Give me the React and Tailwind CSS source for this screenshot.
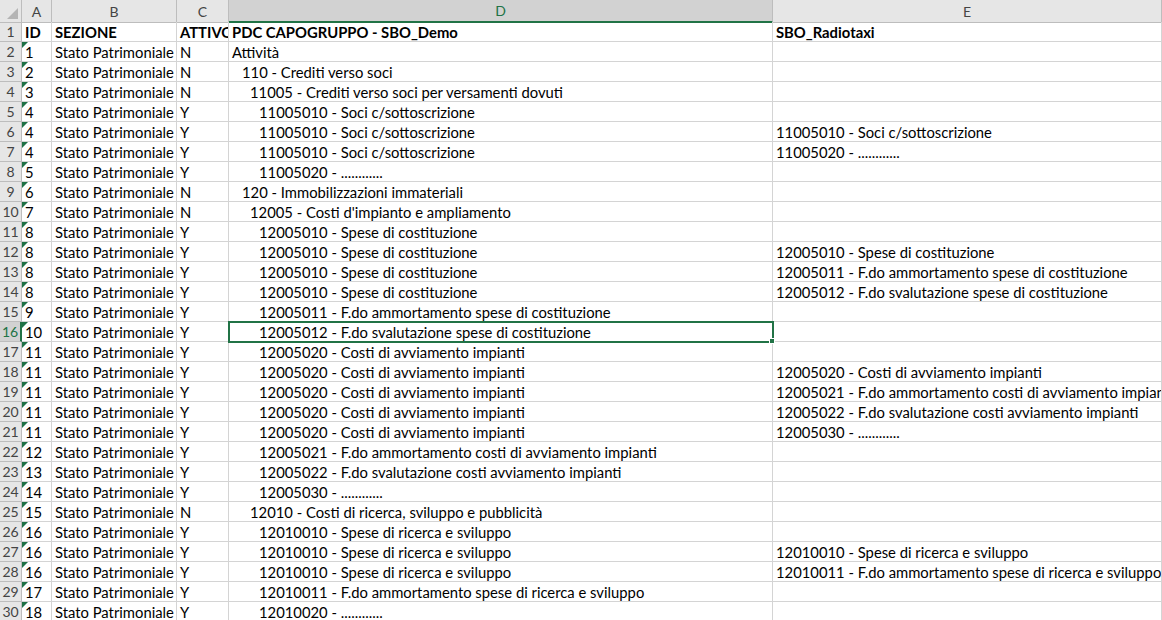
const rows = [
  ["ID", "SEZIONE", "ATTIVO", 0, "PDC CAPOGRUPPO - SBO_Demo", "SBO_Radiotaxi", true],
  ["1", "Stato Patrimoniale", "N", 0, "Attività", ""],
  ["2", "Stato Patrimoniale", "N", 1, "110 - Crediti verso soci", ""],
  ["3", "Stato Patrimoniale", "N", 2, "11005 - Crediti verso soci per versamenti dovuti", ""],
  ["4", "Stato Patrimoniale", "Y", 3, "11005010 - Soci c/sottoscrizione", ""],
  ["4", "Stato Patrimoniale", "Y", 3, "11005010 - Soci c/sottoscrizione", "11005010 - Soci c/sottoscrizione"],
  ["4", "Stato Patrimoniale", "Y", 3, "11005010 - Soci c/sottoscrizione", "11005020 - ............"],
  ["5", "Stato Patrimoniale", "Y", 3, "11005020 - ............", ""],
  ["6", "Stato Patrimoniale", "N", 1, "120 - Immobilizzazioni immateriali", ""],
  ["7", "Stato Patrimoniale", "N", 2, "12005 - Costi d'impianto e ampliamento", ""],
  ["8", "Stato Patrimoniale", "Y", 3, "12005010 - Spese di costituzione", ""],
  ["8", "Stato Patrimoniale", "Y", 3, "12005010 - Spese di costituzione", "12005010 - Spese di costituzione"],
  ["8", "Stato Patrimoniale", "Y", 3, "12005010 - Spese di costituzione", "12005011 - F.do ammortamento spese di costituzione"],
  ["8", "Stato Patrimoniale", "Y", 3, "12005010 - Spese di costituzione", "12005012 - F.do svalutazione spese di costituzione"],
  ["9", "Stato Patrimoniale", "Y", 3, "12005011 - F.do ammortamento spese di costituzione", ""],
  ["10", "Stato Patrimoniale", "Y", 3, "12005012 - F.do svalutazione spese di costituzione", ""],
  ["11", "Stato Patrimoniale", "Y", 3, "12005020 - Costi di avviamento impianti", ""],
  ["11", "Stato Patrimoniale", "Y", 3, "12005020 - Costi di avviamento impianti", "12005020 - Costi di avviamento impianti"],
  ["11", "Stato Patrimoniale", "Y", 3, "12005020 - Costi di avviamento impianti", "12005021 - F.do ammortamento costi di avviamento impianti"],
  ["11", "Stato Patrimoniale", "Y", 3, "12005020 - Costi di avviamento impianti", "12005022 - F.do svalutazione costi avviamento impianti"],
  ["11", "Stato Patrimoniale", "Y", 3, "12005020 - Costi di avviamento impianti", "12005030 - ............"],
  ["12", "Stato Patrimoniale", "Y", 3, "12005021 - F.do ammortamento costi di avviamento impianti", ""],
  ["13", "Stato Patrimoniale", "Y", 3, "12005022 - F.do svalutazione costi avviamento impianti", ""],
  ["14", "Stato Patrimoniale", "Y", 3, "12005030 - ............", ""],
  ["15", "Stato Patrimoniale", "N", 2, "12010 - Costi di ricerca, sviluppo e pubblicità", ""],
  ["16", "Stato Patrimoniale", "Y", 3, "12010010 - Spese di ricerca e sviluppo", ""],
  ["16", "Stato Patrimoniale", "Y", 3, "12010010 - Spese di ricerca e sviluppo", "12010010 - Spese di ricerca e sviluppo"],
  ["16", "Stato Patrimoniale", "Y", 3, "12010010 - Spese di ricerca e sviluppo", "12010011 - F.do ammortamento spese di ricerca e sviluppo"],
  ["17", "Stato Patrimoniale", "Y", 3, "12010011 - F.do ammortamento spese di ricerca e sviluppo", ""],
  ["18", "Stato Patrimoniale", "Y", 3, "12010020 - ............", ""],
];

const indent = ["pl-[3px]", "pl-[13px]", "pl-[21px]", "pl-[30px]"];
const cols = "grid grid-cols-[22px_30px_125px_52px_544px_389px]";

function Cell({ children, className = "" }) {
  return (
    <div className={`relative h-5 border-r border-b border-[#d4d4d4] whitespace-nowrap overflow-hidden leading-5 ${className}`}>
      {children}
    </div>
  );
}

export default function App() {
  return (
    <div className="w-[1162px] h-[620px] overflow-hidden bg-white text-[14.8px] text-black" style={{ fontFamily: "Lato, 'Open Sans', sans-serif" }}>
      <div className={`${cols} h-[22px] bg-[#e6e6e6] text-[#444] text-[14px]`}>
        <div className="relative border-r border-b border-[#bdbdbd]">
          <div className="absolute right-[3px] bottom-[3px] w-0 h-0 border-l-[11px] border-l-transparent border-b-[11px] border-b-[#b4b4b4]" />
        </div>
        {["A", "B", "C", "D", "E"].map((c) => (
          <div key={c} className={`flex items-center justify-center border-r border-[#bdbdbd] ${c === "D" ? "bg-[#d2d2d2] border-b-2 border-b-[#217346] text-[#217346]" : "border-b border-b-[#bdbdbd]"}`}>{c}</div>
        ))}
      </div>
      {rows.map((r, i) => {
        const n = i + 1;
        const sel = n === 16;
        return (
          <div key={i} className={cols}>
            <div className={`h-5 leading-5 text-center text-[14px] border-r border-b border-[#bdbdbd] ${sel ? "bg-[#d2d2d2] text-[#217346] border-r-2 border-r-[#217346]" : "bg-[#e6e6e6] text-[#444]"}`}>{n}</div>
            <Cell className={`pl-[3px] ${r[6] ? "font-bold" : ""}`}>
              {n > 1 && <div className="absolute left-0 top-0 w-0 h-0 border-t-[6px] border-t-[#1e7145] border-r-[6px] border-r-transparent" />}
              {r[0]}
            </Cell>
            <Cell className={`pl-[3px] ${r[6] ? "font-bold" : ""}`}>{r[1]}</Cell>
            <Cell className={`pl-[3px] ${r[6] ? "font-bold" : ""}`}>{r[2]}</Cell>
            <Cell className={`${indent[r[3]]} overflow-visible ${r[6] ? "font-bold" : ""} ${sel ? "outline-2 outline-[#217346] -outline-offset-1 z-10" : ""}`}>
              {r[4]}
              {sel && <div className="absolute -right-[3px] -bottom-[3px] w-[6px] h-[6px] bg-[#217346] border border-white" />}
            </Cell>
            <Cell className={`pl-[3px] ${r[6] ? "font-bold" : ""}`}>{r[5]}</Cell>
          </div>
        );
      })}
    </div>
  );
}
